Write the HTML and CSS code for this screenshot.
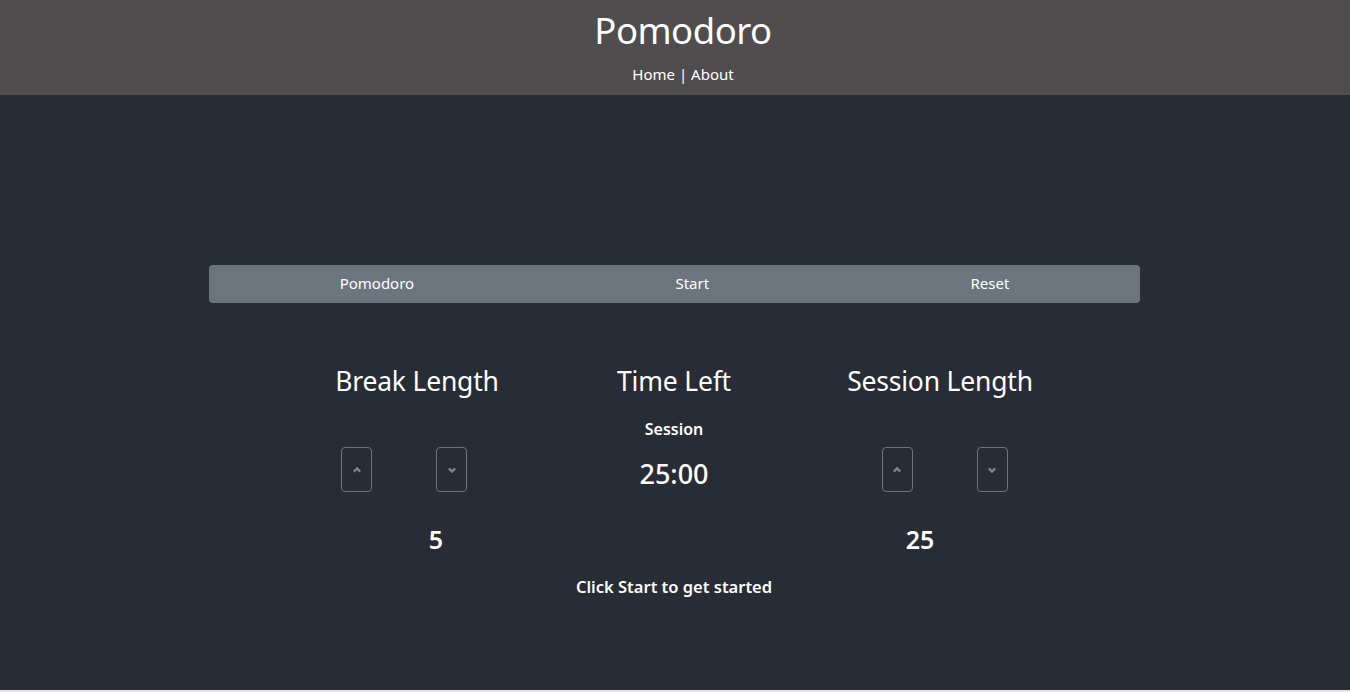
FILE: index.html
```html
<!DOCTYPE html>
<html>
<head>
<meta charset="utf-8">
<link rel="stylesheet" href="styles.css">
</head>
<body>
<div class="app">
  <header class="header">
    <h1 class="title">Pomodoro</h1>
    <nav class="links"><a href="#">Home</a> | <a href="#">About</a></nav>
  </header>
  <main class="main">
    <div class="bar">
      <span class="bar-item">Pomodoro</span>
      <span class="bar-item">Start</span>
      <span class="bar-item">Reset</span>
    </div>
    <div class="controls">
      <section class="col col-break">
        <h2 class="col-title">Break Length</h2>
        <div class="btns">
          <button class="arrow"><svg width="10" height="8" viewBox="0 0 10 8"><path d="M1.8 5.6 L5 2.4 L8.2 5.6" fill="none" stroke="#80858b" stroke-width="2.2"/></svg></button>
          <button class="arrow"><svg width="10" height="8" viewBox="0 0 10 8"><path d="M1.8 2.4 L5 5.6 L8.2 2.4" fill="none" stroke="#80858b" stroke-width="2.2"/></svg></button>
        </div>
        <div class="value value-break">5</div>
      </section>
      <section class="col col-time">
        <h2 class="col-title">Time Left</h2>
        <div class="label">Session</div>
        <div class="clock">25:00</div>
        <div class="hint">Click Start to get started</div>
      </section>
      <section class="col col-session">
        <h2 class="col-title">Session Length</h2>
        <div class="btns">
          <button class="arrow"><svg width="10" height="8" viewBox="0 0 10 8"><path d="M1.8 5.6 L5 2.4 L8.2 5.6" fill="none" stroke="#80858b" stroke-width="2.2"/></svg></button>
          <button class="arrow"><svg width="10" height="8" viewBox="0 0 10 8"><path d="M1.8 2.4 L5 5.6 L8.2 2.4" fill="none" stroke="#80858b" stroke-width="2.2"/></svg></button>
        </div>
        <div class="value value-session">25</div>
      </section>
    </div>
  </main>
</div>
</body>
</html>
```

FILE: styles.css
```css
html, body {
  margin: 0;
  padding: 0;
  background: #e4e4e6;
}
body {
  font-family: "Noto Sans", "Open Sans", sans-serif;
  color: #fff;
}
.app {
  height: 690px;
  background: #282c34;
  display: flex;
  flex-direction: column;
}
.header {
  height: 95px;
  background: #4f4d4d;
  display: flex;
  flex-direction: column;
  align-items: center;
  padding-left: 16px;
}
.title {
  margin: 5px 0 0;
  font-size: 36.5px;
  font-weight: 400;
  line-height: 50px;
  letter-spacing: -0.5px;
}
.links {
  margin-top: 9px;
  font-size: 15px;
  line-height: 20px;
}
.links a {
  color: #fff;
  text-decoration: none;
}
.main {
  padding-top: 170px;
}
.bar {
  margin: 0 210px 0 209px;
  height: 35px;
  background: #6c757d;
  border-radius: 4px;
  display: flex;
  justify-content: space-around;
  align-items: center;
  font-size: 15px;
  padding-bottom: 3px;
}
.controls {
  display: flex;
  padding-top: 60px;
}
.col {
  display: flex;
  flex-direction: column;
  align-items: center;
}
.col-break { width: 200px; margin-left: 317px; }
.col-time { width: 200px; margin-left: 57px; }
.col-session { width: 200px; margin-left: 66px; }
.col-title {
  margin: 0;
  font-size: 26.5px;
  font-weight: 400;
  line-height: 36px;
  letter-spacing: -0.2px;
}
.btns {
  display: flex;
  gap: 64px;
  margin-top: 48px;
}
.col-break .btns { margin-left: -26px; }
.col-session .btns { margin-left: 9px; }
.arrow {
  width: 31px;
  height: 45px;
  padding: 0;
  background: transparent;
  border: 1px solid #6c757d;
  border-radius: 4px;
  display: flex;
  align-items: center;
  justify-content: center;
}
.value {
  margin-top: 30px;
  font-size: 25px;
  font-weight: 600;
  line-height: 34px;
}
.value-break { margin-left: 38px; }
.value-session { margin-left: -40px; }
.label {
  margin-top: 19px;
  font-size: 16px;
  font-weight: 600;
  line-height: 22px;
}
.clock {
  margin-top: 17px;
  font-size: 27px;
  font-weight: 500;
  line-height: 34px;
}
.hint {
  margin-top: 85px;
  font-size: 16.5px;
  font-weight: 600;
  line-height: 22px;
  white-space: nowrap;
}
```
